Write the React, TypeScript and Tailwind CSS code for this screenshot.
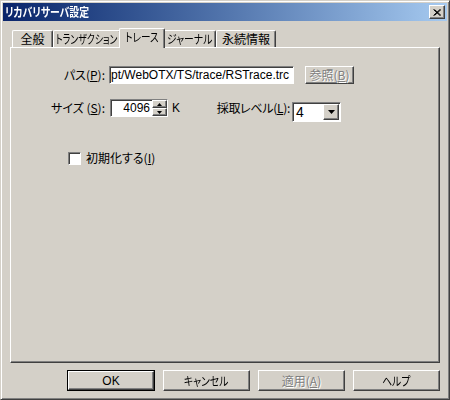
import React from "react";

const FONT = "font-['Noto_Sans_CJK_JP','Liberation_Sans',sans-serif] [font-feature-settings:'palt']";
const LATIN = "font-['Liberation_Sans','Noto_Sans_CJK_JP',sans-serif]";

// classic 3D bevels
const raised =
  "border border-t-white border-l-white border-r-[#404040] border-b-[#404040] shadow-[inset_-1px_-1px_0_#808080]";
const sunken =
  "border border-t-[#808080] border-l-[#808080] border-r-white border-b-white shadow-[inset_1px_1px_0_#404040]";

// katakana in the original UI font is much narrower, so squeeze it a little
const tabs = [
  { label: "全般", w: "w-[41px]", sq: "" },
  { label: "トランザクション", w: "w-[68px]", sq: "scale-x-[0.74]" },
  { label: "トレース", w: "w-[46px]", sq: "scale-x-[0.8]", active: true },
  { label: "ジャーナル", w: "w-[53px]", sq: "scale-x-[0.82]" },
  { label: "永続情報", w: "w-[60px]", sq: "" },
];

function U({ children }: { children: React.ReactNode }) {
  return <span className="underline underline-offset-[1px]">{children}</span>;
}

function Btn({
  children,
  isDefault,
  disabled,
  className = "",
}: {
  children: React.ReactNode;
  isDefault?: boolean;
  disabled?: boolean;
  className?: string;
}) {
  const text = disabled
    ? "text-[#808080] [text-shadow:1px_1px_0_#fff]"
    : "text-black";
  if (isDefault) {
    return (
      <div className={`border border-black ${className}`}>
        <div className={`${raised} h-full flex items-center justify-center ${text}`}>
          {children}
        </div>
      </div>
    );
  }
  return (
    <div className={`${raised} flex items-center justify-center whitespace-nowrap ${text} ${className}`}>
      {children}
    </div>
  );
}

export default function App() {
  return (
    <div
      className={`${FONT} w-[450px] h-[400px] bg-[#d4d0c8] border border-[#404040] border-t-[#d4d0c8] border-l-[#d4d0c8] shadow-[inset_1px_1px_0_#fff,inset_-1px_-1px_0_#808080] p-[2px] flex flex-col text-[12px] leading-[14px] text-black`}
    >
      {/* ── Title bar ── */}
      <div className="h-[18px] flex items-center justify-between bg-gradient-to-r from-[#0a246a] to-[#a6caf0] pl-[2px] pr-[2px]">
        <span className="inline-block origin-left scale-x-[0.82] text-white font-bold text-[12px] whitespace-nowrap">
          リカバリサーバ設定
        </span>
        <div className={`${raised} w-[16px] h-[14px] bg-[#d4d0c8] flex items-center justify-center`}>
          <svg width="8" height="7" viewBox="0 0 8 7">
            <path d="M0.5 0.5 L7 6.5 M1.5 0.5 L8 6.5 M7 0.5 L0.5 6.5 M8 0.5 L1.5 6.5" stroke="#000" strokeWidth="1" />
          </svg>
        </div>
      </div>

      {/* ── Body ── */}
      <div className="flex flex-col px-[7px] pt-[7px]">
        {/* tabs */}
        <div className="flex items-end h-[19px] pl-[2px]">
          {tabs.map((t) =>
            t.active ? (
              <div
                key={t.label}
                className={`${t.w} relative z-10 -mx-[2px] -mb-[1px] h-[20px] pb-[4px] bg-[#d4d0c8] border-t border-l border-r border-t-white border-l-white border-r-[#404040] shadow-[inset_-1px_0_0_#808080] rounded-t-[2px] flex items-center justify-center whitespace-nowrap`}
              >
                <span className={`inline-block shrink-0 ${t.sq}`}>{t.label}</span>
              </div>
            ) : (
              <div
                key={t.label}
                className={`${t.w} h-[17px] border-t border-l border-r border-t-white border-l-white border-r-[#404040] shadow-[inset_-1px_0_0_#808080] rounded-t-[2px] flex items-center justify-center whitespace-nowrap`}
              >
                <span className={`inline-block shrink-0 ${t.sq}`}>{t.label}</span>
              </div>
            ),
          )}
        </div>

        {/* panel */}
        <div className={`${raised} w-[430px] h-[316px] flex flex-col pt-[18px]`}>
          {/* path row */}
          <div className="flex items-center h-[18px]">
            <div className="w-[94px] text-right">
              パス(<U>P</U>):
            </div>
            <div className={`${sunken} ${LATIN} ml-[4px] w-[185px] h-[18px] bg-white flex items-center pl-[1px] overflow-hidden whitespace-nowrap`}>
              pt/WebOTX/TS/trace/RSTrace.trc
            </div>
            <Btn disabled className="ml-[11px] w-[49px] h-[18px]">
              参照(<U>B</U>)
            </Btn>
          </div>

          {/* size / level row */}
          <div className="flex items-start mt-[15px]">
            <div className="flex items-center h-[18px]">
              <div className="w-[94px] text-right">
                サイズ (<U>S</U>):
              </div>
              <div className={`${sunken} ${LATIN} ml-[5px] w-[58px] h-[18px] bg-white flex items-stretch`}>
                <div className="flex-1 flex items-center justify-end pr-[2px]">4096</div>
                <div className="w-[15px] flex flex-col">
                  <div className={`${raised} flex-1 bg-[#d4d0c8] flex items-center justify-center`}>
                    <svg width="5" height="3" viewBox="0 0 5 3">
                      <path d="M2.5 0 L5 3 L0 3 Z" fill="#000" />
                    </svg>
                  </div>
                  <div className={`${raised} flex-1 bg-[#d4d0c8] flex items-center justify-center`}>
                    <svg width="5" height="3" viewBox="0 0 5 3">
                      <path d="M0 0 L5 0 L2.5 3 Z" fill="#000" />
                    </svg>
                  </div>
                </div>
              </div>
              <div className="w-[122px] flex items-center justify-between pl-[4px]">
                <span className={LATIN}>K</span>
                <span className="tracking-[-0.3px]">
                  採取レベル(<U>L</U>):
                </span>
              </div>
            </div>
            <div className={`${sunken} ${LATIN} ml-[2px] mt-[3px] w-[49px] h-[20px] bg-white flex items-stretch p-[1px]`}>
              <div className="flex-1 flex items-center pl-[2px] text-[14px]">4</div>
              <div className={`${raised} w-[16px] bg-[#d4d0c8] flex items-center justify-center`}>
                <svg width="7" height="4" viewBox="0 0 7 4">
                  <path d="M0 0 L7 0 L3.5 4 Z" fill="#000" />
                </svg>
              </div>
            </div>
          </div>

          {/* checkbox row */}
          <div className="flex items-center mt-[29px] ml-[57px]">
            <div className={`${sunken} w-[13px] h-[13px] bg-white`} />
            <span className="ml-[5px]">
              初期化する(<U>I</U>)
            </span>
          </div>
        </div>

        {/* buttons */}
        <div className="flex justify-end gap-[8px] mt-[7px] w-[430px]">
          <Btn isDefault className={`${LATIN} w-[88px] h-[21px]`}>
            OK
          </Btn>
          <Btn className="w-[87px] h-[21px]">
            <span className="inline-block scale-x-[0.82]">キャンセル</span>
          </Btn>
          <Btn disabled className="w-[87px] h-[21px]">
            適用(<U>A</U>)
          </Btn>
          <Btn className="w-[87px] h-[21px]">
            <span className="inline-block scale-x-[0.82]">ヘルプ</span>
          </Btn>
        </div>
      </div>
    </div>
  );
}
